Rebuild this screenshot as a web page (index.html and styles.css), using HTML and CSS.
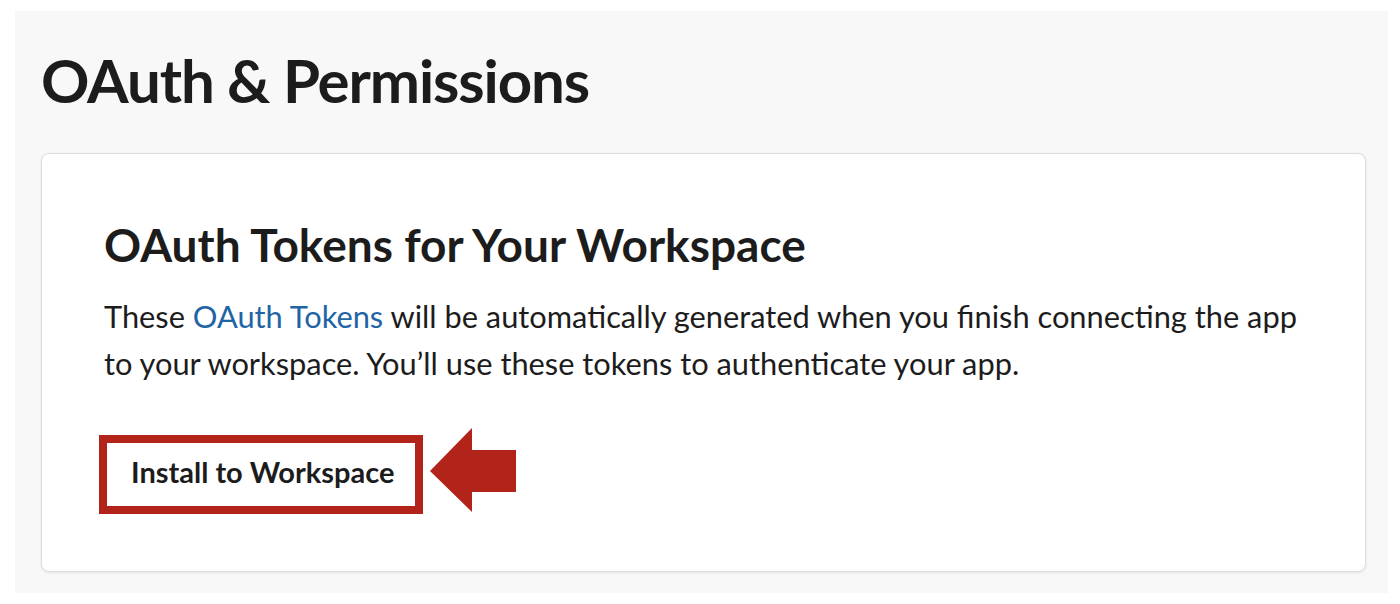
FILE: index.html
```html
<!DOCTYPE HTML>
<html>
    <head>
        <title>OAuth &amp; Permissions</title>
        <link rel="stylesheet" href="styles.css">
    </head>

    <body>
        <div class="page">
            <h1 class="page-title">OAuth &amp; Permissions</h1>

            <div class="card">
                <h2 class="card-title">OAuth Tokens for Your Workspace</h2>
                <p class="card-text">These <a href="#">OAuth Tokens</a> will be automatically generated when you finish connecting the app to your workspace. You’ll use these tokens to authenticate your app.</p>

                <div class="install-row">
                    <button class="install-btn" type="button">Install to Workspace</button>
                    <!-- callout arrow pointing at the button -->
                    <svg class="arrow" width="86" height="84" viewBox="0 0 86 84">
                        <polygon points="0,43 42,0 42,22 86,22 86,64 42,64 42,84" fill="#b2231a"/>
                    </svg>
                </div>
            </div>
        </div>
    </body>
</html>
```

FILE: styles.css
```css
body {
    margin: 0;
    padding: 11px 12px 12px 15px;
    background-color: #ffffff;
    font-family: Lato, "Open Sans", sans-serif;
    color: #1d1c1d;
}
.page {
    background: #f8f8f8;
    padding: 33px 22px 21px 26px;
}
.page-title {
    margin: 0 0 37px 0;
    font-size: 60px;
    line-height: 1.2;
    font-weight: 700;
    letter-spacing: -1.1px;
}
.card {
    background: #ffffff;
    border: 1px solid #dddddd;
    border-radius: 8px;
    box-shadow: 0 1px 3px rgba(0, 0, 0, 0.08);
    padding: 63px 45px 57px 62px;
}
.card-title {
    margin: 0;
    font-size: 46px;
    line-height: 1.2;
    font-weight: 700;
}
.card-text {
    margin: 21px 0 48px 0;
    font-size: 30.8px;
    line-height: 47px;
}
.card-text a {
    color: #1f64a5;
    text-decoration: none;
}
.install-row {
    display: flex;
    align-items: flex-start;
    margin-left: -5px;
}
.install-btn {
    background: #ffffff;
    border: 8px solid #b2231a;
    font-family: Lato, "Open Sans", sans-serif;
    font-size: 29px;
    font-weight: 700;
    color: #1d1c1d;
    line-height: 57px;
    padding: 0 21px 6px 24px;
}
.arrow {
    margin-left: 7px;
    margin-top: -7px;
}
```
